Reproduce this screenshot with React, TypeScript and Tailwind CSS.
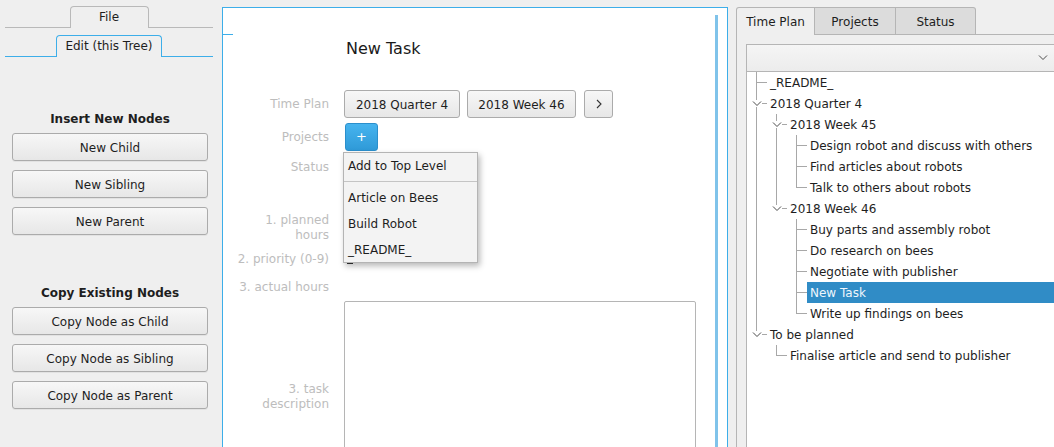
import React from "react";

type Row = { t: string; d: number; g: boolean[]; c: "tee" | "elbow"; exp?: boolean; sel?: boolean };

const rows: Row[] = [
  { t: "_README_", d: 0, g: [], c: "tee" },
  { t: "2018 Quarter 4", d: 0, g: [], c: "tee", exp: true },
  { t: "2018 Week 45", d: 1, g: [true], c: "tee", exp: true },
  { t: "Design robot and discuss with others", d: 2, g: [true, true], c: "tee" },
  { t: "Find articles about robots", d: 2, g: [true, true], c: "tee" },
  { t: "Talk to others about robots", d: 2, g: [true, true], c: "elbow" },
  { t: "2018 Week 46", d: 1, g: [true], c: "elbow", exp: true },
  { t: "Buy parts and assembly robot", d: 2, g: [true, false], c: "tee" },
  { t: "Do research on bees", d: 2, g: [true, false], c: "tee" },
  { t: "Negotiate with publisher", d: 2, g: [true, false], c: "tee" },
  { t: "New Task", d: 2, g: [true, false], c: "tee", sel: true },
  { t: "Write up findings on bees", d: 2, g: [true, false], c: "elbow" },
  { t: "To be planned", d: 0, g: [], c: "elbow", exp: true },
  { t: "Finalise article and send to publisher", d: 1, g: [false], c: "elbow" },
];

function Chevron({ className }: { className?: string }) {
  return (
    <svg width="10" height="6" viewBox="0 0 10 6" className={className}>
      <polyline points="1,0.5 5,4.5 9,0.5" fill="none" stroke="#4a4a4a" strokeWidth="1" />
    </svg>
  );
}

function Guide({ on }: { on: boolean }) {
  return (
    <div className="relative w-[20px] h-[21px] shrink-0">
      {on && <span className="absolute left-[9px] top-0 h-[21px] w-px bg-[#a8a8a8]" />}
    </div>
  );
}

function Connector({ c, exp }: { c: "tee" | "elbow"; exp?: boolean }) {
  if (exp) {
    return (
      <div className="relative w-[20px] h-[21px] shrink-0">
        <span className="absolute left-[9px] top-0 h-[7px] w-px bg-[#a8a8a8]" />
        {c === "tee" && <span className="absolute left-[9px] top-[14px] h-[7px] w-px bg-[#a8a8a8]" />}
        <Chevron className="absolute left-[5px] top-[8px]" />
        <span className="absolute left-[15px] top-[10px] h-px w-[5px] bg-[#a8a8a8]" />
      </div>
    );
  }
  return (
    <div className="relative w-[20px] h-[21px] shrink-0">
      {c === "tee" ? (
        <span className="absolute left-[9px] top-0 h-[21px] w-px bg-[#a8a8a8]" />
      ) : (
        <span className="absolute left-[9px] top-0 h-[11px] w-px bg-[#a8a8a8]" />
      )}
      <span className="absolute left-[9px] top-[10px] h-px w-[11px] bg-[#a8a8a8]" />
    </div>
  );
}

function TreeRow({ r }: { r: Row }) {
  return (
    <div className="flex h-[21px] shrink-0">
      {r.g.map((on, i) => (
        <Guide key={i} on={on} />
      ))}
      <Connector c={r.c} exp={r.exp} />
      <div
        className={
          r.sel
            ? "flex-1 h-[21px] pl-[3px] pt-px leading-[20px] whitespace-nowrap bg-[#308cc6] text-[#eef6fc]"
            : "flex-1 h-[21px] pl-[3px] pt-px leading-[20px] whitespace-nowrap"
        }
      >
        {r.t}
      </div>
    </div>
  );
}

function LeftButton({ children }: { children: React.ReactNode }) {
  return (
    <div className="ml-[12px] w-[196px] h-[28px] shrink-0 rounded-[3px] border border-[#ababab] bg-gradient-to-b from-[#f7f7f7] to-[#e7e7e7] flex items-center justify-center pt-px shadow-[0_1px_0_rgba(0,0,0,0.05)]">
      {children}
    </div>
  );
}

function Label({ children }: { children: React.ReactNode }) {
  return <div className="text-right text-[#bdbdbd] leading-[15px] whitespace-nowrap">{children}</div>;
}

export default function App() {
  return (
    <div className="h-[447px] w-[1054px] overflow-hidden bg-[#efefef] flex text-[12px] text-[#1e1e1e] font-['DejaVu_Sans',sans-serif]">
      {/* Left panel */}
      <div className="w-[222px] shrink-0 flex flex-col">
        <div className="mt-[6px] ml-[5px] w-[208px] flex h-[22px] shrink-0">
          <div className="flex-1 border-b border-[#b9b9b9]" />
          <div className="w-[79px] border border-b-0 border-[#b9b9b9] rounded-t-[4px] flex items-center justify-center pb-px">
            File
          </div>
          <div className="flex-1 border-b border-[#b9b9b9]" />
        </div>
        <div className="mt-[7px] ml-[5px] w-[208px] flex h-[22px] shrink-0">
          <div className="flex-1 border-b border-[#3daee9]" />
          <div className="w-[106px] border border-b-0 border-[#3daee9] rounded-t-[4px] flex items-center justify-center pb-px">
            Edit (this Tree)
          </div>
          <div className="flex-1 border-b border-[#3daee9]" />
        </div>
        <div className="mt-[55px] w-[220px] shrink-0 text-center font-bold leading-[15px]">Insert New Nodes</div>
        <div className="mt-[6px] flex flex-col gap-[9px] shrink-0">
          <LeftButton>New Child</LeftButton>
          <LeftButton>New Sibling</LeftButton>
          <LeftButton>New Parent</LeftButton>
        </div>
        <div className="mt-[51px] w-[220px] shrink-0 text-center font-bold leading-[15px]">Copy Existing Nodes</div>
        <div className="mt-[6px] flex flex-col gap-[9px] shrink-0">
          <LeftButton>Copy Node as Child</LeftButton>
          <LeftButton>Copy Node as Sibling</LeftButton>
          <LeftButton>Copy Node as Parent</LeftButton>
        </div>
      </div>

      {/* Middle panel */}
      <div className="mt-[7px] w-[506px] shrink-0 h-[470px] bg-white border border-[#3daee9] flex">
        <div className="w-[492px] flex flex-col">
          {/* title */}
          <div className="h-[82px] shrink-0 grid grid-cols-[106px_1fr] gap-x-[15px]">
            <div>
              <div className="mt-[26px] w-[10px] h-px bg-[#3daee9]" />
            </div>
            <div className="pt-[31px] pl-[2px] text-[16px] leading-[19px] text-[#1a1a1a]">New Task</div>
          </div>
          {/* time plan */}
          <div className="h-[28px] shrink-0 grid grid-cols-[106px_1fr] gap-x-[15px] items-center">
            <Label>Time Plan</Label>
            <div className="flex items-center h-[28px]">
              <div className="w-[116px] h-[28px] pt-px rounded-[3px] border border-[#ababab] bg-gradient-to-b from-[#f7f7f7] to-[#e7e7e7] flex items-center justify-center">
                2018 Quarter 4
              </div>
              <div className="ml-[7px] w-[109px] h-[28px] pt-px rounded-[3px] border border-[#ababab] bg-gradient-to-b from-[#f7f7f7] to-[#e7e7e7] flex items-center justify-center">
                2018 Week 46
              </div>
              <div className="ml-[8px] w-[29px] h-[28px] rounded-[3px] border border-[#ababab] bg-gradient-to-b from-[#f7f7f7] to-[#e7e7e7] flex items-center justify-center">
                <svg width="6" height="10" viewBox="0 0 6 10">
                  <polyline points="1,1 5,5 1,9" fill="none" stroke="#333" strokeWidth="1.1" />
                </svg>
              </div>
            </div>
          </div>
          {/* projects */}
          <div className="mt-[5px] h-[28px] shrink-0 grid grid-cols-[106px_1fr] gap-x-[15px] items-center">
            <Label>Projects</Label>
            <div className="relative h-[28px]">
              <div className="ml-px w-[33px] h-[28px] rounded-[3px] border border-[#2b8fcc] bg-gradient-to-b from-[#46b4ef] to-[#2f9ad8] text-white flex items-center justify-center text-[13px]">
                +
              </div>
              <div className="absolute z-10 left-[-1px] top-[29px] w-[135px] border border-[#b4b4b4] bg-[#f3f3f3] shadow-[2px_3px_6px_rgba(0,0,0,0.28)] flex flex-col">
                <div className="h-[25px] pl-[4px] flex items-center">Add to Top Level</div>
                <div className="h-[7px] flex items-center">
                  <div className="w-full h-px bg-[#c4c4c4]" />
                </div>
                <div className="h-[26px] pl-[4px] flex items-center">Article on Bees</div>
                <div className="h-[26px] pl-[4px] flex items-center">Build Robot</div>
                <div className="h-[25px] pl-[4px] pt-px flex items-center">_README_</div>
              </div>
            </div>
          </div>
          {/* status */}
          <div className="h-[32px] shrink-0 grid grid-cols-[106px_1fr] gap-x-[15px] items-center">
            <Label>Status</Label>
            <div />
          </div>
          {/* planned hours */}
          <div className="mt-[29px] h-[31px] shrink-0 grid grid-cols-[106px_1fr] gap-x-[15px] items-center">
            <Label>
              1. planned
              <br />
              hours
            </Label>
            <div />
          </div>
          {/* priority */}
          <div className="h-[32px] shrink-0 grid grid-cols-[106px_1fr] gap-x-[15px] items-center">
            <div className="pt-px">
              <Label>2. priority (0-9)</Label>
            </div>
            <div className="self-stretch pt-[20px]">
              <div className="ml-[3px] w-[6px] h-px bg-[#333]" />
            </div>
          </div>
          {/* actual hours */}
          <div className="h-[24px] shrink-0 grid grid-cols-[106px_1fr] gap-x-[15px] items-center">
            <Label>3. actual hours</Label>
            <div />
          </div>
          {/* description */}
          <div className="mt-[2px] shrink-0 grid grid-cols-[106px_1fr] gap-x-[15px] items-center">
            <div className="pt-[2px]">
              <Label>
                3. task
                <br />
                description
              </Label>
            </div>
            <div className="w-[352px] h-[190px] border border-[#b5b5b5] rounded-[2px] bg-white" />
          </div>
        </div>
        <div className="w-[3px] mt-[7px] bg-[#80c3ea]" />
      </div>

      <div className="w-[8px] shrink-0" />

      {/* Right panel */}
      <div className="flex-1 mt-[7px] flex flex-col min-w-0">
        <div className="h-[28px] flex shrink-0">
          <div className="w-[79px] border-l border-t border-r border-[#b5b5b5] rounded-tl-[3px] bg-[#efefef] flex items-center justify-center pt-px">
            Time Plan
          </div>
          <div className="w-[81px] border-t border-r border-b border-[#b5b5b5] bg-[#dcdcdc] flex items-center justify-center pt-px">
            Projects
          </div>
          <div className="w-[80px] border-t border-r border-b border-[#b5b5b5] rounded-tr-[3px] bg-[#dcdcdc] flex items-center justify-center pt-px">
            Status
          </div>
          <div className="flex-1 border-b border-[#b5b5b5]" />
        </div>
        <div className="flex-1 border-l border-[#b5b5b5] pl-[9px] pt-[9px] flex flex-col">
          <div className="h-[28px] shrink-0 border border-r-0 border-[#b5b5b5] bg-gradient-to-b from-[#f5f5f5] to-[#ececec] flex items-center justify-end pr-[6px]">
            <Chevron />
          </div>
          <div className="flex-1 bg-white border-l border-[#b5b5b5] flex flex-col">
            {rows.map((r, i) => (
              <TreeRow key={i} r={r} />
            ))}
          </div>
        </div>
      </div>
    </div>
  );
}
